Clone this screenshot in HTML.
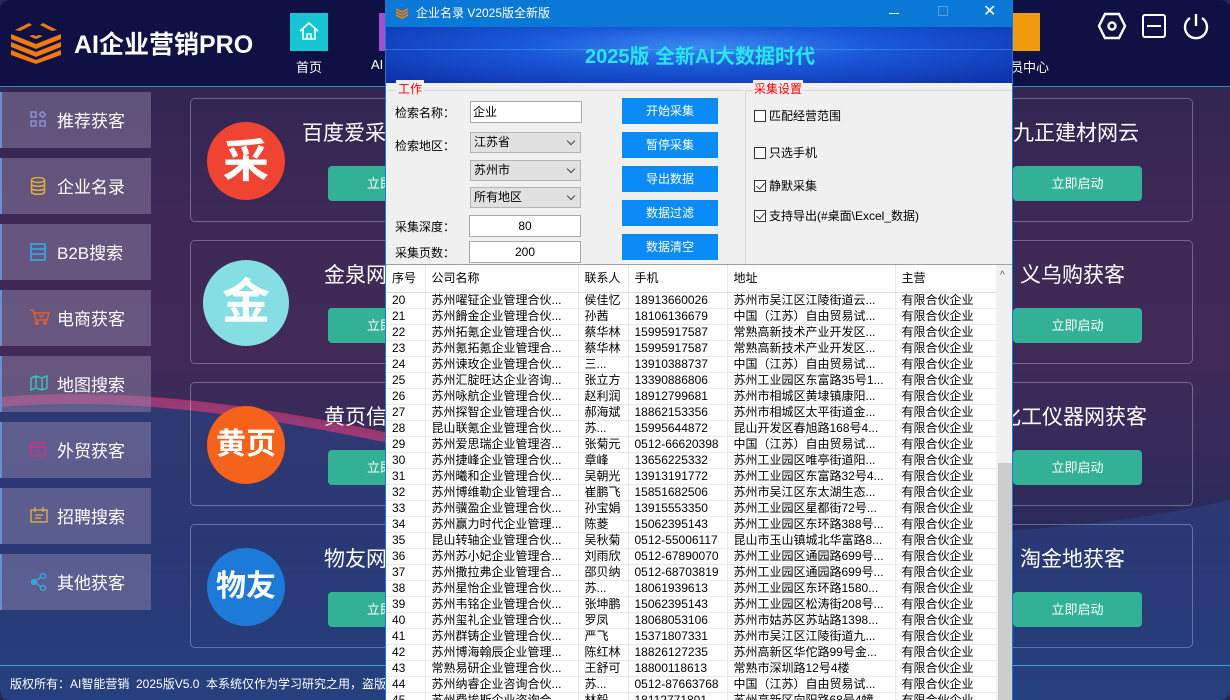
<!DOCTYPE html>
<html><head><meta charset="utf-8">
<style>
*{margin:0;padding:0;box-sizing:border-box}
body{width:1230px;height:700px;overflow:hidden;position:relative;font-family:"Liberation Sans","Noto Sans CJK SC",sans-serif;background:#2a2550}
.abs{position:absolute}
#app{position:absolute;left:0;top:0;width:1230px;height:700px;border-radius:10px;overflow:hidden;
background:linear-gradient(180deg,#2b2450 0%,#3d2856 30%,#412a58 50%,#2c2a5c 75%,#233a70 100%)}
#hdr{position:absolute;left:0;top:0;width:1230px;height:87px;background:#0f1043;border-bottom:1px solid #2a8bb0}
.side{position:absolute;left:0;width:151px;height:56px;background:rgba(150,140,175,0.45);border-left:2px solid #6a8fd0;color:#fff;font-size:17px}
.side span{position:absolute;left:55px;top:15px}
.side svg{position:absolute;left:28px;top:19px}
.card{position:absolute;border:1px solid rgba(220,220,240,0.35);border-radius:5px}
.circ{position:absolute;width:78px;height:78px;border-radius:50%;color:#fff;font-weight:bold;text-align:center;line-height:78px}
.ct{position:absolute;color:#fff;font-size:21px}
.btn{position:absolute;height:35px;background:#33b196;border-radius:4px;color:#fff;font-size:13px;text-align:center;line-height:35px}
#dlg{position:absolute;left:385px;top:0;width:628px;height:700px;background:#f0f0f0;border-left:1px solid #1a7ad6;border-right:1px solid #1a7ad6;overflow:hidden}
#tb{position:absolute;left:0;top:0;width:628px;height:27px;background:#0a78d6;color:#fff;font-size:12px}
#ban{position:absolute;left:0;top:27px;width:628px;height:56px;background:radial-gradient(ellipse at 50% 35%,#3a8af0 0%,#1a58d8 40%,#0d2fa8 100%)}
.lbl{position:absolute;font-size:12px;color:#000}
.inp{position:absolute;background:#fff;border:1px solid #a8a8a8;font-size:12px;height:22px;line-height:20px}
.sel{position:absolute;background:#e1e1e1;border:1px solid #b4b4b4;font-size:12px;height:21px;line-height:19px;padding-left:3px}
.sel:after{content:"";position:absolute;right:6px;top:5px;width:5px;height:5px;border-right:1px solid #444;border-bottom:1px solid #444;transform:rotate(45deg)}
.bb{position:absolute;left:236px;width:96px;height:26px;background:#0a8bf5;color:#fff;font-size:12px;text-align:center;line-height:26px}
.cb{position:absolute;left:368px;font-size:12px;color:#000}
.cb i{display:inline-block;width:12px;height:12px;border:1px solid #333;background:#fff;vertical-align:-2px;margin-right:3px;position:relative}
.cb i.k:after{content:"";position:absolute;left:3px;top:0px;width:4px;height:7px;border-right:1.5px solid #333;border-bottom:1.5px solid #333;transform:rotate(40deg)}
#grid{position:absolute;left:0;top:265px;width:610px;height:435px;background:#fff;font-size:12px;font-family:"Liberation Sans","Noto Sans CJK SC",sans-serif}
table{border-collapse:collapse;table-layout:fixed;width:610px}
td{height:16px;line-height:15px;border-bottom:1px solid #e8e8e8;border-right:1px solid #e8e8e8;padding-left:6px;white-space:nowrap;overflow:hidden;color:#000}
tr.h td{height:27px;font-size:12px;border-bottom:1px solid #ddd}
</style></head><body>
<div id="app">
 <div id="hdr">
  <svg class="abs" style="left:9px;top:20px" width="54" height="44" viewBox="0 0 54 44">
   <g fill="#f07a10"><path d="M2 22 L27 32 L52 22 L52 27 L27 37 L2 27Z"/><path d="M2 30 L27 40 L52 30 L52 35 L27 44 L2 35Z"/><path d="M2 14 L27 24 L52 14 L52 19 L27 29 L2 19Z"/>
   <path d="M6 10 L20 3 L23 5 L11 11Z M48 10 L34 3 L31 5 L43 11Z M20 16 L27 19 L34 16 L30 15 L27 16 L24 15Z"/></g></svg>
  <div class="abs" style="left:74px;top:25px;color:#fff;font-size:25px;font-weight:bold">AI企业营销PRO</div>
  <div class="abs" style="left:290px;top:13px;width:38px;height:38px;background:#17c5d2"></div>
  <svg class="abs" style="left:298px;top:21px" width="22" height="20" viewBox="0 0 22 20"><path d="M2 10 L11 2 L20 10 M5 8 V18 H17 V8 M9 18 V13 H13 V18" fill="none" stroke="#fff" stroke-width="1.6"/></svg>
  <div class="abs" style="left:296px;top:57px;color:#fff;font-size:13px">首页</div>
  <div class="abs" style="left:379px;top:13px;width:8px;height:38px;background:#a54fd0"></div>
  <div class="abs" style="left:371px;top:57px;color:#fff;font-size:13px">AI</div>
  <div class="abs" style="left:1013px;top:13px;width:27px;height:38px;background:#f09a10"></div>
  <div class="abs" style="left:1010px;top:57px;color:#fff;font-size:13px">员中心</div>
  <svg class="abs" style="left:1097px;top:12px" width="30" height="28" viewBox="0 0 30 28"><path d="M8 2 H22 L28 14 L22 26 H8 L2 14Z" fill="none" stroke="#fff" stroke-width="2.4"/><circle cx="15" cy="14" r="3.5" fill="none" stroke="#fff" stroke-width="2.4"/></svg>
  <div class="abs" style="left:1142px;top:14px;width:24px;height:24px;border:2px solid #fff;border-radius:3px"></div>
  <div class="abs" style="left:1147px;top:25px;width:14px;height:2px;background:#fff"></div>
  <svg class="abs" style="left:1182px;top:12px" width="28" height="28" viewBox="0 0 28 28"><path d="M8 6 A11 11 0 1 0 20 6" fill="none" stroke="#fff" stroke-width="2.4"/><path d="M14 2 V14" stroke="#fff" stroke-width="2.4"/></svg>
 </div>
 <svg class="abs" style="left:0;top:380px" width="1230" height="320" viewBox="0 0 1230 320"><path d="M0 20 C200 0 400 60 700 130 C900 170 1100 150 1230 120 L1230 320 L0 320Z" fill="rgba(40,70,140,0.5)"/><path d="M0 22 C200 5 400 60 700 128" fill="none" stroke="rgba(240,60,120,0.55)" stroke-width="10"/></svg>
 <div class="side" style="top:92px"><svg width="16" height="16"><g fill="none" stroke="#8a8fd8" stroke-width="1.5"><rect x="1" y="1" width="5" height="5"/><rect x="1" y="10" width="5" height="5"/><rect x="10" y="10" width="5" height="5"/><path d="M12.5 0.5 L15.5 3.5 L12.5 6.5 L9.5 3.5Z"/></g></svg><span>推荐获客</span></div>
 <div class="side" style="top:158px"><svg width="16" height="18"><g fill="none" stroke="#d8b040" stroke-width="1.5"><ellipse cx="8" cy="3" rx="6.5" ry="2.5"/><path d="M1.5 3 V15 C1.5 18 14.5 18 14.5 15 V3 M1.5 7 C1.5 10 14.5 10 14.5 7 M1.5 11 C1.5 14 14.5 14 14.5 11"/></g></svg><span>企业名录</span></div>
 <div class="side" style="top:224px"><svg width="16" height="18"><g fill="none" stroke="#3aa0e0" stroke-width="1.8"><rect x="1" y="1" width="14" height="16"/><path d="M1 6 H15 M1 11 H15"/></g></svg><span>B2B搜索</span></div>
 <div class="side" style="top:290px"><svg width="20" height="16"><g fill="none" stroke="#e06030" stroke-width="1.5"><path d="M0 1 H3 L6 11 H17 L19 4 H4"/><circle cx="7" cy="14" r="1.3"/><circle cx="15" cy="14" r="1.3"/><path d="M9 6 L11 8 L14 6"/></g></svg><span>电商获客</span></div>
 <div class="side" style="top:356px"><svg width="18" height="16"><path d="M1 3 L6 1 L12 3 L17 1 V13 L12 15 L6 13 L1 15Z M6 1 V13 M12 3 V15" fill="none" stroke="#40c0b0" stroke-width="1.5"/></svg><span>地图搜索</span></div>
 <div class="side" style="top:422px"><svg width="16" height="16"><g fill="none" stroke="#d03080" stroke-width="1.5"><rect x="1" y="2" width="14" height="13"/><path d="M1 6 H15"/></g><circle cx="8" cy="10" r="1.6" fill="#d03080"/></svg><span>外贸获客</span></div>
 <div class="side" style="top:488px"><svg width="18" height="16"><g fill="none" stroke="#d8a840" stroke-width="1.5"><rect x="1" y="3" width="16" height="12"/><path d="M5 0 V5 M13 0 V5 M5 8 H13 M5 11 H11"/></g></svg><span>招聘搜索</span></div>
 <div class="side" style="top:554px"><svg width="18" height="18"><g fill="none" stroke="#40a0e0" stroke-width="1.5"><circle cx="4" cy="9" r="2.5" fill="#40a0e0"/><circle cx="13" cy="3" r="2.5"/><circle cx="13" cy="15" r="2.5"/><path d="M6 8 L11 4 M6 10 L11 14"/></g></svg><span>其他获客</span></div>

 <div class="card" style="left:190px;top:98px;width:420px;height:124px"></div>
 <div class="card" style="left:190px;top:240px;width:420px;height:124px"></div>
 <div class="card" style="left:190px;top:382px;width:420px;height:124px"></div>
 <div class="card" style="left:190px;top:524px;width:420px;height:124px"></div>
 <div class="card" style="left:800px;top:98px;width:393px;height:124px"></div>
 <div class="card" style="left:800px;top:240px;width:393px;height:124px"></div>
 <div class="card" style="left:800px;top:382px;width:393px;height:124px"></div>
 <div class="card" style="left:800px;top:524px;width:393px;height:124px"></div>
 <div class="circ" style="left:207px;top:122px;background:#f04432;font-size:46px">采</div>
 <div class="circ" style="left:203px;top:260px;width:86px;height:86px;line-height:86px;background:#85dfe2;font-size:48px">金</div>
 <div class="circ" style="left:207px;top:406px;background:#f4621c;font-size:30px">黄页</div>
 <div class="circ" style="left:207px;top:548px;background:#1e7ad8;font-size:30px">物友</div>
 <div class="ct" style="left:302px;top:117px">百度爱采购</div>
 <div class="ct" style="left:324px;top:259px">金泉网</div>
 <div class="ct" style="left:324px;top:401px">黄页信息</div>
 <div class="ct" style="left:324px;top:543px">物友网</div>
 <div class="btn" style="left:328px;top:166px;width:130px">立即启动</div>
 <div class="btn" style="left:328px;top:308px;width:130px">立即启动</div>
 <div class="btn" style="left:328px;top:450px;width:130px">立即启动</div>
 <div class="btn" style="left:328px;top:592px;width:130px">立即启动</div>
 <div class="ct" style="left:1013px;top:117px">九正建材网云</div>
 <div class="ct" style="left:1020px;top:259px">义乌购获客</div>
 <div class="ct" style="left:1000px;top:401px">化工仪器网获客</div>
 <div class="ct" style="left:1020px;top:543px">淘金地获客</div>
 <div class="btn" style="left:1013px;top:166px;width:129px">立即启动</div>
 <div class="btn" style="left:1013px;top:308px;width:129px">立即启动</div>
 <div class="btn" style="left:1013px;top:450px;width:129px">立即启动</div>
 <div class="btn" style="left:1013px;top:592px;width:129px">立即启动</div>
 <div class="abs" style="left:0;top:665px;width:1230px;height:1px;background:#2aa8d0"></div>
 <div class="abs" style="left:10px;top:675px;color:#fff;font-size:12px;white-space:nowrap">版权所有：AI智能营销&nbsp;&nbsp;2025版V5.0&nbsp;&nbsp;本系统仅作为学习研究之用，盗版必究</div>
</div>

<div id="dlg">
 <div id="tb">
  <svg class="abs" style="left:9px;top:5px" width="14" height="14" viewBox="0 0 14 14"><g fill="#f07a10"><path d="M1 6 L7 9 L13 6 V8 L7 11 L1 8Z"/><path d="M1 9 L7 12 L13 9 V11 L7 14 L1 11Z"/><path d="M1 3 L7 6 L13 3 V5 L7 8 L1 5Z"/></g></svg>
  <div class="abs" style="left:30px;top:4px">企业名录 V2025版全新版</div>
  <div class="abs" style="left:503px;top:13px;width:10px;height:1px;background:#fff"></div>
  <div class="abs" style="left:552px;top:6px;width:10px;height:10px;border:1px solid #5a9ee0"></div>
  <div class="abs" style="left:597px;top:1px;font-size:16px;color:#fff">✕</div>
 </div>
 <div id="ban">
  <div class="abs" style="left:0;top:22px;width:628px;height:1px;background:rgba(120,200,255,0.3)"></div>
  <div class="abs" style="left:0;top:13px;width:628px;text-align:center;color:#28e6ee;font-size:20px;font-weight:bold">2025版 全新AI大数据时代</div>
 </div>
 <div class="abs" style="left:2px;top:90px;width:355px;height:1px;background:#d8d8d8"></div>
 <div class="abs" style="left:360px;top:90px;width:266px;height:1px;background:#d8d8d8"></div>
 <div class="abs" style="left:359px;top:90px;width:1px;height:174px;background:#d8d8d8"></div>
 <div class="abs" style="left:10px;top:80px;color:#f00;font-size:12px;background:#f0f0f0;padding:0 2px">工作</div>
 <div class="abs" style="left:367px;top:80px;color:#f00;font-size:12px;background:#f0f0f0;padding:0 1px">采集设置</div>
 <div class="lbl" style="left:9px;top:104px">检索名称：</div>
 <div class="lbl" style="left:9px;top:137px">检索地区：</div>
 <div class="lbl" style="left:9px;top:218px">采集深度：</div>
 <div class="lbl" style="left:9px;top:244px">采集页数：</div>
 <div class="inp" style="left:84px;top:101px;width:112px;padding-left:2px">企业</div>
 <div class="sel" style="left:84px;top:132px;width:111px">江苏省</div>
 <div class="sel" style="left:84px;top:160px;width:111px">苏州市</div>
 <div class="sel" style="left:84px;top:187px;width:111px">所有地区</div>
 <div class="inp" style="left:83px;top:215px;width:112px;text-align:center">80</div>
 <div class="inp" style="left:83px;top:241px;width:112px;text-align:center">200</div>
 <div class="bb" style="top:98px">开始采集</div>
 <div class="bb" style="top:132px">暂停采集</div>
 <div class="bb" style="top:166px">导出数据</div>
 <div class="bb" style="top:200px">数据过滤</div>
 <div class="bb" style="top:234px">数据清空</div>
 <div class="cb" style="top:107px"><i></i>匹配经营范围</div>
 <div class="cb" style="top:144px"><i></i>只选手机</div>
 <div class="cb" style="top:177px"><i class="k"></i>静默采集</div>
 <div class="cb" style="top:207px"><i class="k"></i>支持导出(#桌面\Excel_数据)</div>
 <div class="abs" style="left:0;top:264px;width:628px;height:1px;background:#a0a0a0"></div>
 <div id="grid">
 <table>
 <colgroup><col style="width:39px"><col style="width:153px"><col style="width:50px"><col style="width:99px"><col style="width:168px"><col style="width:101px"></colgroup>
 <tr class="h"><td>序号</td><td>公司名称</td><td>联系人</td><td>手机</td><td>地址</td><td>主营</td></tr>
 <tr><td>20</td><td>苏州嚁钲企业管理合伙...</td><td>侯佳忆</td><td>18913660026</td><td>苏州市吴江区江陵街道云...</td><td>有限合伙企业</td></tr>
 <tr><td>21</td><td>苏州餶金企业管理合伙...</td><td>孙茜</td><td>18106136679</td><td>中国（江苏）自由贸易试...</td><td>有限合伙企业</td></tr>
 <tr><td>22</td><td>苏州拓氪企业管理合伙...</td><td>蔡华林</td><td>15995917587</td><td>常熟高新技术产业开发区...</td><td>有限合伙企业</td></tr>
 <tr><td>23</td><td>苏州氪拓氪企业管理合...</td><td>蔡华林</td><td>15995917587</td><td>常熟高新技术产业开发区...</td><td>有限合伙企业</td></tr>
 <tr><td>24</td><td>苏州谏玫企业管理合伙...</td><td>三...</td><td>13910388737</td><td>中国（江苏）自由贸易试...</td><td>有限合伙企业</td></tr>
 <tr><td>25</td><td>苏州汇腚旺达企业咨询...</td><td>张立方</td><td>13390886806</td><td>苏州工业园区东富路35号1...</td><td>有限合伙企业</td></tr>
 <tr><td>26</td><td>苏州咏航企业管理合伙...</td><td>赵利润</td><td>18912799681</td><td>苏州市相城区黄埭镇康阳...</td><td>有限合伙企业</td></tr>
 <tr><td>27</td><td>苏州探智企业管理合伙...</td><td>郝海斌</td><td>18862153356</td><td>苏州市相城区太平街道金...</td><td>有限合伙企业</td></tr>
 <tr><td>28</td><td>昆山联氪企业管理合伙...</td><td>苏...</td><td>15995644872</td><td>昆山开发区春旭路168号4...</td><td>有限合伙企业</td></tr>
 <tr><td>29</td><td>苏州爱思瑞企业管理咨...</td><td>张菊元</td><td>0512-66620398</td><td>中国（江苏）自由贸易试...</td><td>有限合伙企业</td></tr>
 <tr><td>30</td><td>苏州捷峰企业管理合伙...</td><td>章峰</td><td>13656225332</td><td>苏州工业园区唯亭街道阳...</td><td>有限合伙企业</td></tr>
 <tr><td>31</td><td>苏州曦和企业管理合伙...</td><td>吴朝光</td><td>13913191772</td><td>苏州工业园区东富路32号4...</td><td>有限合伙企业</td></tr>
 <tr><td>32</td><td>苏州博维勒企业管理合...</td><td>崔鹏飞</td><td>15851682506</td><td>苏州市吴江区东太湖生态...</td><td>有限合伙企业</td></tr>
 <tr><td>33</td><td>苏州骥盈企业管理合伙...</td><td>孙宝娟</td><td>13915553350</td><td>苏州工业园区星都街72号...</td><td>有限合伙企业</td></tr>
 <tr><td>34</td><td>苏州赢力时代企业管理...</td><td>陈菱</td><td>15062395143</td><td>苏州工业园区东环路388号...</td><td>有限合伙企业</td></tr>
 <tr><td>35</td><td>昆山转轴企业管理合伙...</td><td>吴秋菊</td><td>0512-55006117</td><td>昆山市玉山镇城北华富路8...</td><td>有限合伙企业</td></tr>
 <tr><td>36</td><td>苏州苏小妃企业管理合...</td><td>刘雨欣</td><td>0512-67890070</td><td>苏州工业园区通园路699号...</td><td>有限合伙企业</td></tr>
 <tr><td>37</td><td>苏州撒拉弗企业管理合...</td><td>邵贝纳</td><td>0512-68703819</td><td>苏州工业园区通园路699号...</td><td>有限合伙企业</td></tr>
 <tr><td>38</td><td>苏州星怡企业管理合伙...</td><td>苏...</td><td>18061939613</td><td>苏州工业园区东环路1580...</td><td>有限合伙企业</td></tr>
 <tr><td>39</td><td>苏州韦铭企业管理合伙...</td><td>张坤鹏</td><td>15062395143</td><td>苏州工业园区松涛街208号...</td><td>有限合伙企业</td></tr>
 <tr><td>40</td><td>苏州玺礼企业管理合伙...</td><td>罗凤</td><td>18068053106</td><td>苏州市姑苏区苏站路1398...</td><td>有限合伙企业</td></tr>
 <tr><td>41</td><td>苏州群铸企业管理合伙...</td><td>严飞</td><td>15371807331</td><td>苏州市吴江区江陵街道九...</td><td>有限合伙企业</td></tr>
 <tr><td>42</td><td>苏州博海翰辰企业管理...</td><td>陈红林</td><td>18826127235</td><td>苏州高新区华佗路99号金...</td><td>有限合伙企业</td></tr>
 <tr><td>43</td><td>常熟易研企业管理合伙...</td><td>王舒可</td><td>18800118613</td><td>常熟市深圳路12号4楼</td><td>有限合伙企业</td></tr>
 <tr><td>44</td><td>苏州纳睿企业咨询合伙...</td><td>苏...</td><td>0512-87663768</td><td>中国（江苏）自由贸易试...</td><td>有限合伙企业</td></tr>
 <tr><td>45</td><td>苏州费埃斯企业咨询合...</td><td>林毅</td><td>18112771801</td><td>苏州高新区向阳路68号4幢</td><td>有限合伙企业</td></tr>
 </table>
 </div>
 <div class="abs" style="left:610px;top:265px;width:17px;height:435px;background:#f0f0f0"></div>
 <div class="abs" style="left:612px;top:463px;width:14px;height:237px;background:#cdcdcd"></div>
 <div class="abs" style="left:614px;top:270px;font-size:10px;color:#555">^</div>
</div>
</body></html>
